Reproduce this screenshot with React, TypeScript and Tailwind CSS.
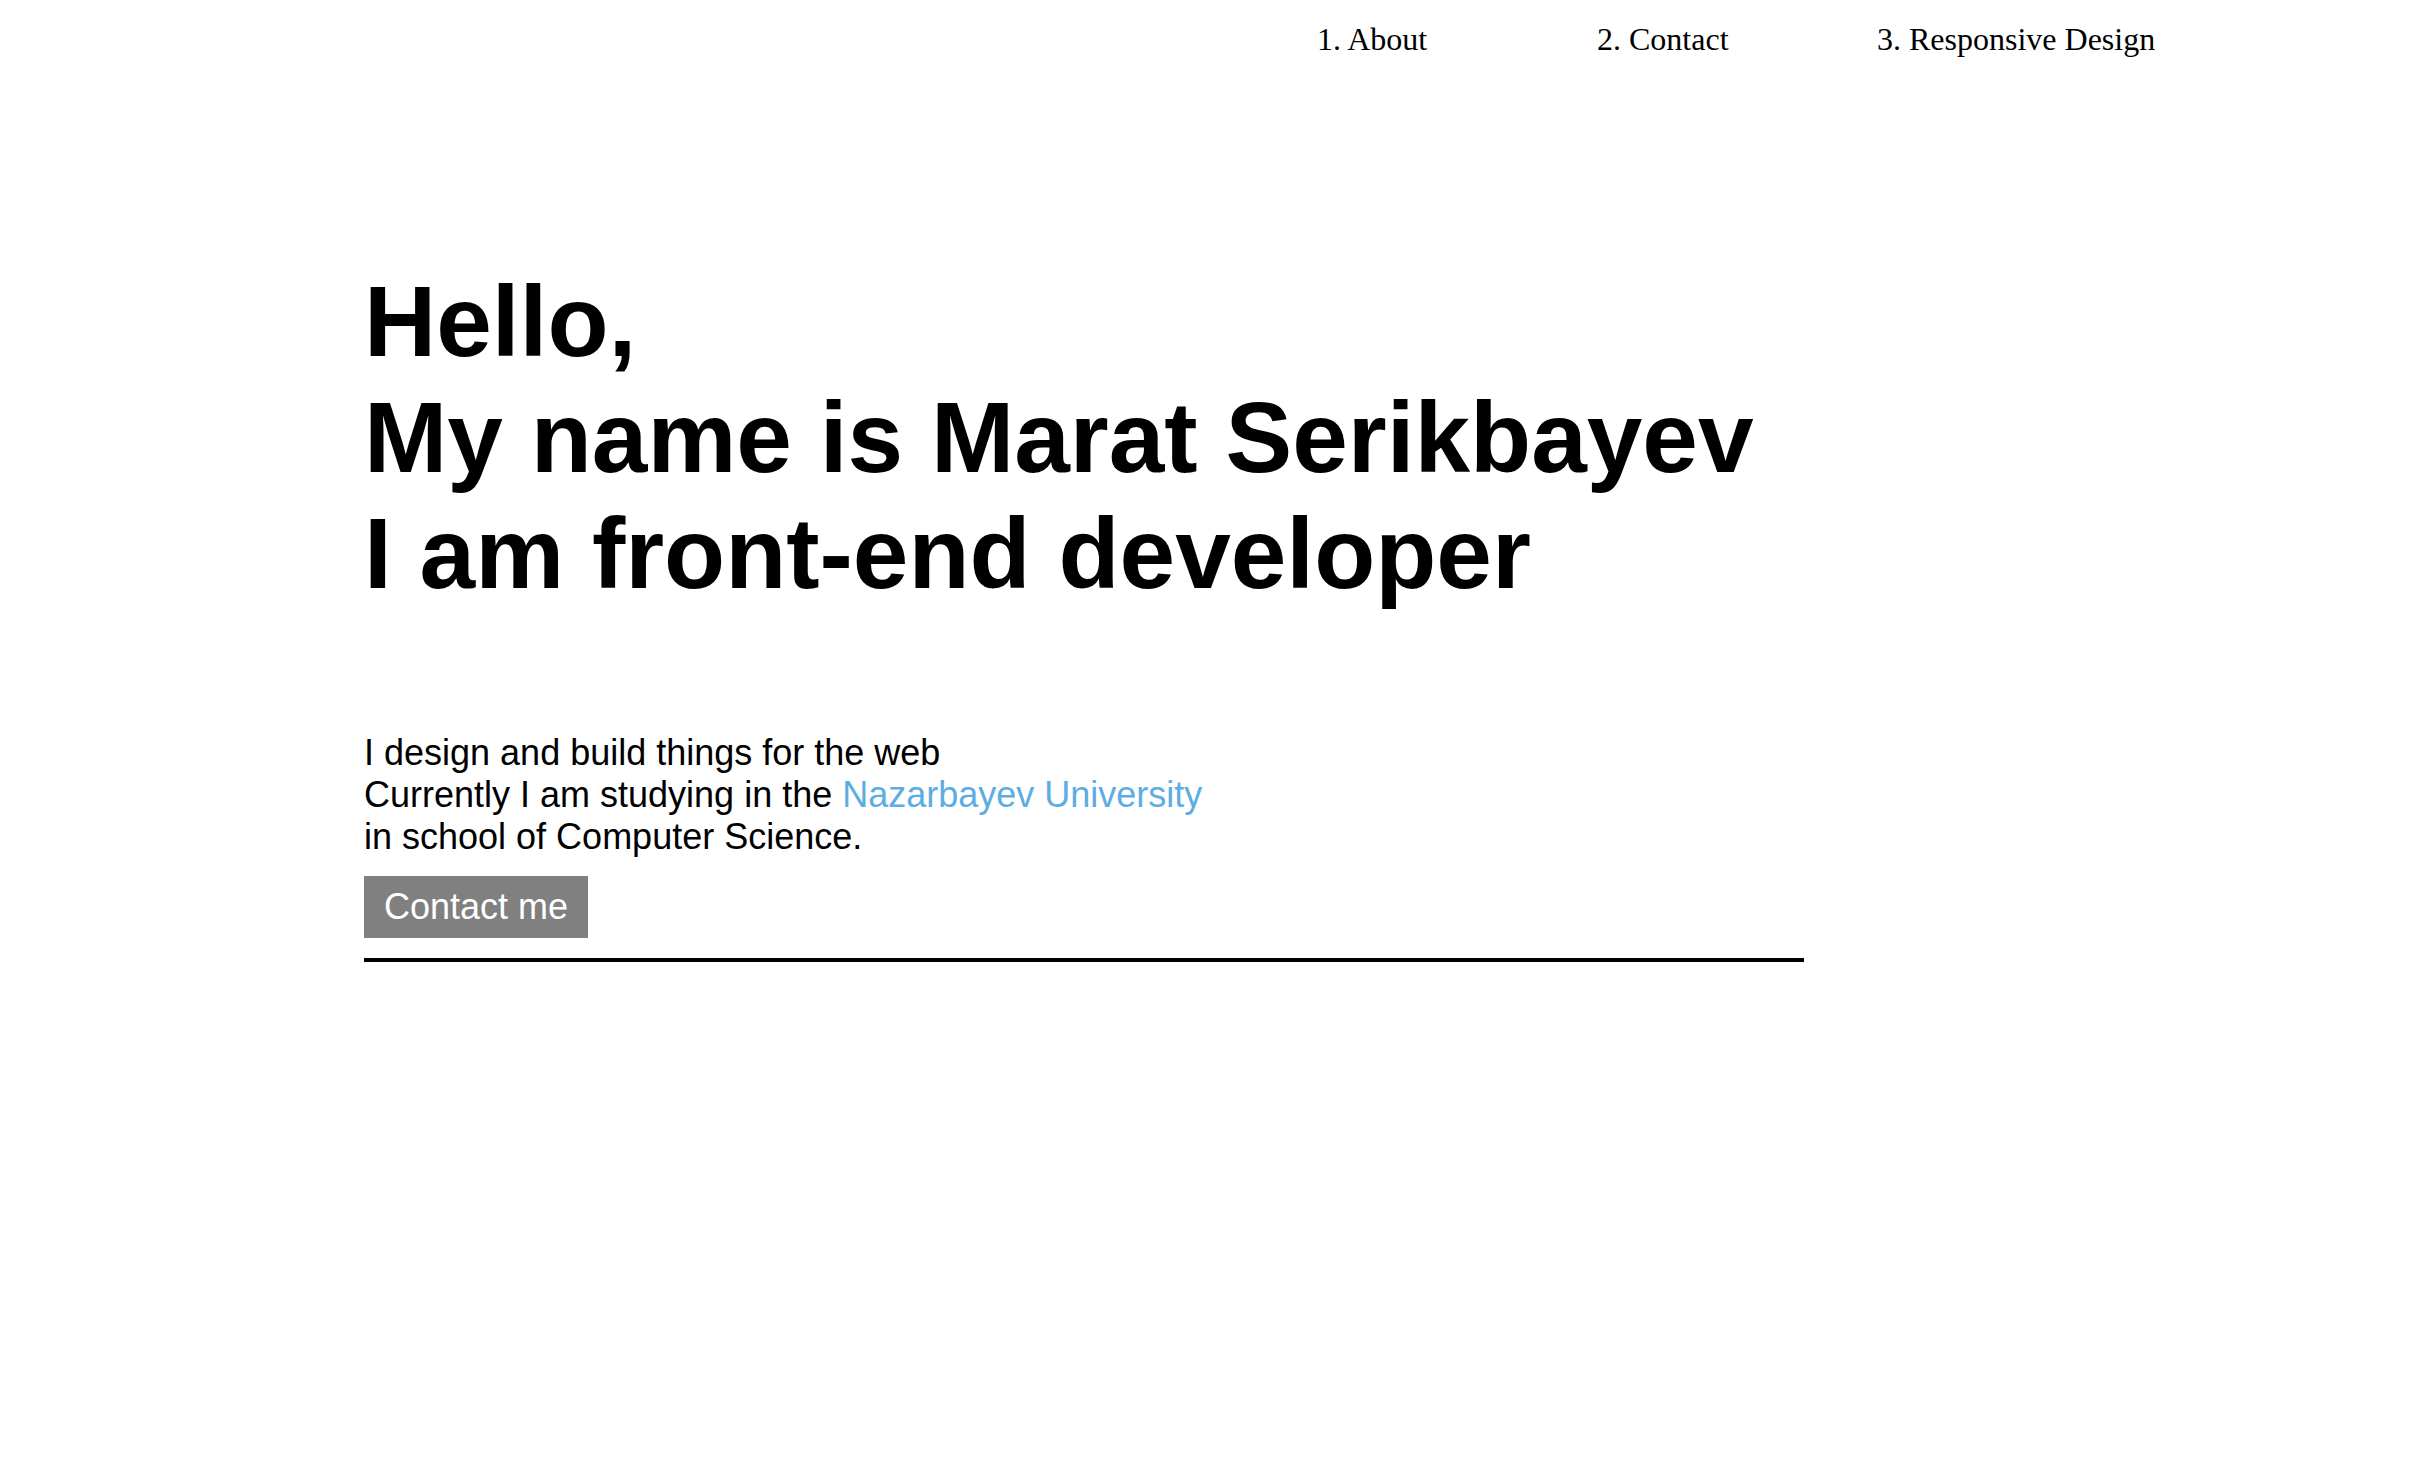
import React from "react";

const links = ["1. About", "2. Contact", "3. Responsive Design"];

const App = () => {
  return (
    <div className="min-h-screen bg-white text-black">
      <nav className="flex justify-end pr-[259px] pt-[21px] font-['Liberation_Serif',serif] text-[32px] leading-[36px]">
        {links.map((link) => (
          <a key={link} href="#" className="w-[280px] whitespace-nowrap">
            {link}
          </a>
        ))}
      </nav>
      <main className="pl-[364px] pt-[206px] font-['Liberation_Sans',Arial,sans-serif]">
        <h1 className="text-[100px] leading-[116px] font-bold">
          Hello,
          <br />
          My name is Marat Serikbayev
          <br />
          I am front-end developer
        </h1>
        <p className="mt-[121px] text-[36px] leading-[42px]">
          I design and build things for the web
          <br />
          Currently I am studying in the{" "}
          <a href="#" className="text-[#5dade2]">
            Nazarbayev University
          </a>
          <br />
          in school of Computer Science.
        </p>
        <button className="mt-[18px] h-[62px] bg-[#808080] px-[20px] text-[36px] leading-[42px] text-white">
          Contact me
        </button>
        <div className="mt-[20px] h-[4px] w-[1440px] bg-black" />
      </main>
    </div>
  );
};

export default App;
